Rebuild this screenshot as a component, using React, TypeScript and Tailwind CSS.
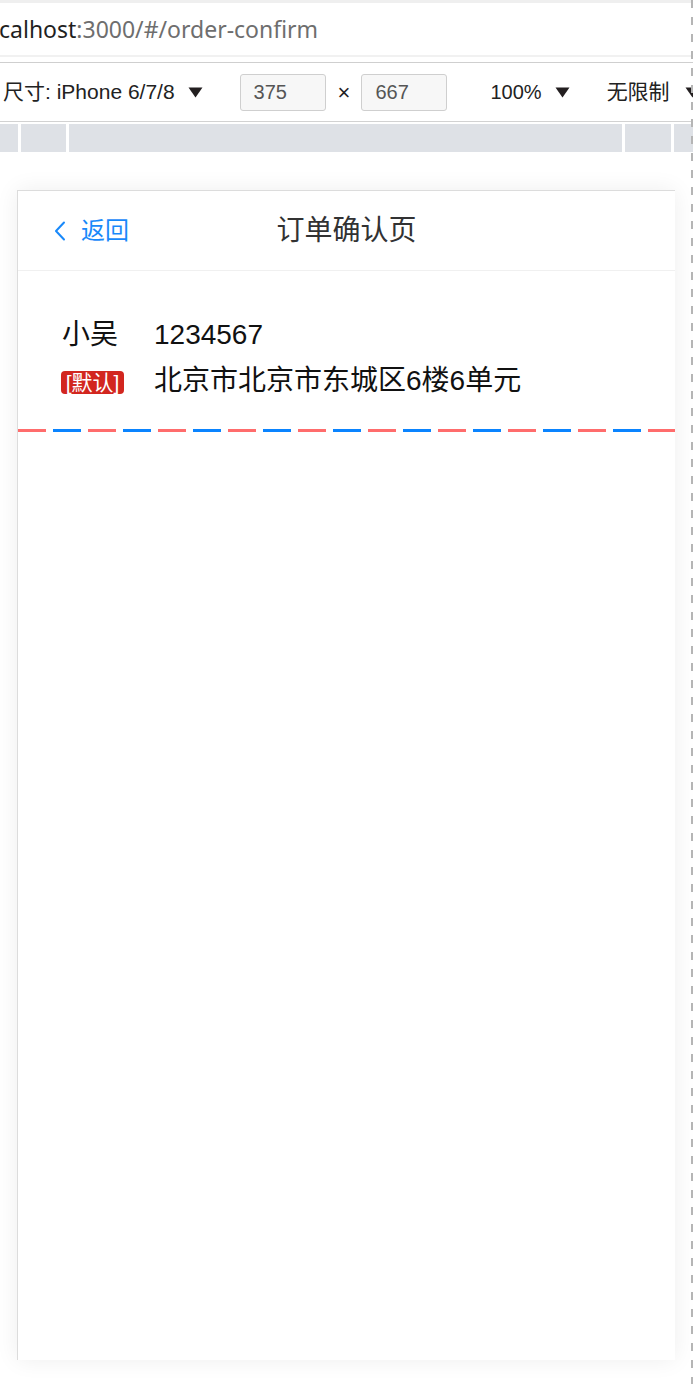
import React from 'react';

const Caret: React.FC = () => (
  <svg width="15" height="11" viewBox="0 0 15 11" className="shrink-0">
    <path d="M0.5 0.5h14L7.5 10.5z" fill="#231f20" />
  </svg>
);

const SizeBox: React.FC<{ value: string }> = ({ value }) => (
  <div className="shrink-0 w-[86px] h-[37px] flex items-center pl-[13px] bg-[#f7f7f7] border border-[#cfcfcf] rounded-[3px] text-[#555] text-[20px]">
    {value}
  </div>
);

const BrowserBar: React.FC = () => (
  <div>
    <div className="h-[3px] bg-[#efefef]" />
    <div className="h-[52px] flex items-center text-[23px] font-['Noto_Sans',sans-serif] -ml-[1px]">
      <span className="text-[#1f1f1f]">calhost</span>
      <span className="text-[#6e6e6e]">:3000/#/order-confirm</span>
    </div>
    <div className="h-[2px] bg-[#f1f1f1]" />
    <div className="h-[5px]" />
    <div className="h-px bg-[#cfcfcf]" />
    <div className="h-[58px] flex items-center text-[21px] text-[#222] font-['Liberation_Sans','Noto_Sans_CJK_SC',sans-serif] whitespace-nowrap overflow-hidden">
      <span className="shrink-0 pl-[3px]">尺寸: iPhone 6/7/8</span>
      <span className="shrink-0 ml-[13px]"><Caret /></span>
      <div className="shrink-0 ml-[37px]"><SizeBox value="375" /></div>
      <span className="shrink-0 ml-[12px] mr-[11px] text-[22px]">×</span>
      <SizeBox value="667" />
      <span className="shrink-0 ml-[43px] text-[20px]">100%</span>
      <span className="shrink-0 ml-[13px]"><Caret /></span>
      <span className="shrink-0 ml-[37px]">无限制</span>
      <span className="shrink-0 ml-[15px]"><Caret /></span>
    </div>
    <div className="h-px bg-[#d2d2d2]" />
    <div className="h-[2px]" />
    <div className="h-[28px] flex gap-[3px]">
      <div className="w-[18px] bg-[#dee1e6]" />
      <div className="w-[45px] bg-[#dee1e6]" />
      <div className="w-[553px] bg-[#dee1e6]" />
      <div className="w-[46px] bg-[#dee1e6]" />
      <div className="flex-1 bg-[#dee1e6]" />
    </div>
  </div>
);

const NavBar: React.FC = () => (
  <div className="h-[80px] grid grid-cols-[1fr_auto_1fr] items-center border-b border-[#f0f0f0]">
    <div className="flex items-center pl-[36px] text-[#1989fa] text-[24px]">
      <svg width="12" height="20" viewBox="0 0 12 20" fill="none">
        <path d="M10 1.5L2 10l8 8.5" stroke="#1989fa" strokeWidth="2" strokeLinecap="round" strokeLinejoin="round" />
      </svg>
      <span className="ml-[15px]">返回</span>
    </div>
    <div className="text-[28px] text-[#323233]">订单确认页</div>
    <div />
  </div>
);

const AddressCard: React.FC = () => (
  <div>
    <div className="pl-[44px] pt-[41px] pb-[25px] text-[28px] text-[#111]">
      <div className="h-[46px] flex items-center">
        <span className="w-[92px]">小吴</span>
        <span>1234567</span>
      </div>
      <div className="h-[46px] flex items-center">
        <div className="w-[92px]">
          <span className="inline-flex items-center h-[23px] w-[63px] -ml-[1px] justify-center rounded-[4px] bg-[#d2261f] text-white text-[21px] leading-none">
            [默认]
          </span>
        </div>
        <span>北京市北京市东城区6楼6单元</span>
      </div>
    </div>
    <div className="h-[3px] bg-[repeating-linear-gradient(90deg,#ff6c6c_0,#ff6c6c_28px,transparent_28px,transparent_35px,#0a84ff_35px,#0a84ff_63px,transparent_63px,transparent_70px)]" />
  </div>
);

export default function App() {
  return (
    <div className="relative w-[693px] h-[1384px] overflow-hidden bg-white">
      <BrowserBar />
      <div className="pt-[38px] pl-[17px]">
        <div className="w-[658px] h-[1170px] bg-white border-l border-t border-[#dcdcdc] shadow-[0_0_22px_rgba(0,0,0,0.07)] font-['Liberation_Sans','Noto_Sans_CJK_SC',sans-serif]">
          <NavBar />
          <AddressCard />
        </div>
      </div>
      <div className="absolute top-0 right-0 w-[2px] h-full bg-[repeating-linear-gradient(180deg,#b5b5b5_0,#b5b5b5_8px,transparent_8px,transparent_17px)]" />
    </div>
  );
}
